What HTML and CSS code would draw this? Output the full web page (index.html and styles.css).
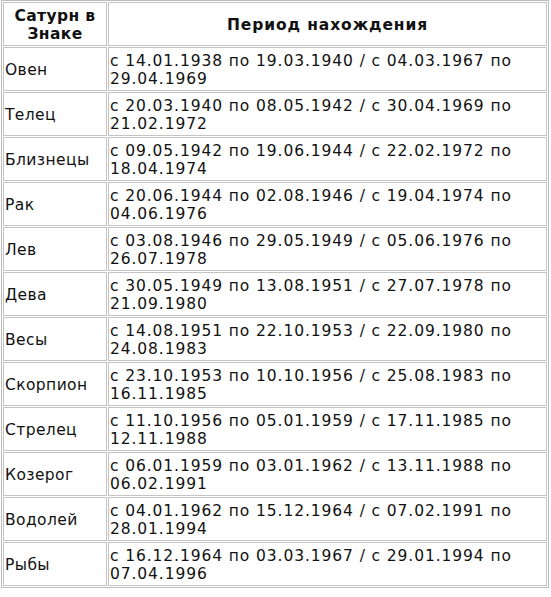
FILE: index.html
```html
<!DOCTYPE html>
<html lang="ru">
<head>
<meta charset="utf-8">
<link rel="stylesheet" href="styles.css">
</head>
<body>
<table class="saturn">
<thead>
<tr><th class="sign">Сатурн в Знаке</th><th class="period">Период нахождения</th></tr>
</thead>
<tbody>
<tr><td class="sign">Овен</td><td class="period">с 14.01.1938 по 19.03.1940 / с 04.03.1967 по 29.04.1969</td></tr>
<tr><td class="sign">Телец</td><td class="period">с 20.03.1940 по 08.05.1942 / с 30.04.1969 по 21.02.1972</td></tr>
<tr><td class="sign">Близнецы</td><td class="period">с 09.05.1942 по 19.06.1944 / с 22.02.1972 по 18.04.1974</td></tr>
<tr><td class="sign">Рак</td><td class="period">с 20.06.1944 по 02.08.1946 / с 19.04.1974 по 04.06.1976</td></tr>
<tr><td class="sign">Лев</td><td class="period">с 03.08.1946 по 29.05.1949 / с 05.06.1976 по 26.07.1978</td></tr>
<tr><td class="sign">Дева</td><td class="period">с 30.05.1949 по 13.08.1951 / с 27.07.1978 по 21.09.1980</td></tr>
<tr><td class="sign">Весы</td><td class="period">с 14.08.1951 по 22.10.1953 / с 22.09.1980 по 24.08.1983</td></tr>
<tr><td class="sign">Скорпион</td><td class="period">с 23.10.1953 по 10.10.1956 / с 25.08.1983 по 16.11.1985</td></tr>
<tr><td class="sign">Стрелец</td><td class="period">с 11.10.1956 по 05.01.1959 / с 17.11.1985 по 12.11.1988</td></tr>
<tr><td class="sign">Козерог</td><td class="period">с 06.01.1959 по 03.01.1962 / с 13.11.1988 по 06.02.1991</td></tr>
<tr><td class="sign">Водолей</td><td class="period">с 04.01.1962 по 15.12.1964 / с 07.02.1991 по 28.01.1994</td></tr>
<tr><td class="sign">Рыбы</td><td class="period">с 16.12.1964 по 03.03.1967 / с 29.01.1994 по 07.04.1996</td></tr>
</tbody>
</table>
</body>
</html>
```
FILE: styles.css
```css
html, body {
  margin: 0;
  padding: 0;
  background: #ffffff;
}
.saturn {
  margin-left: 1px;
  width: 548px;
  border: 1px solid #bdbdbd;
  border-spacing: 1px;
  color: #111;
  font-family: "DejaVu Sans", Verdana, sans-serif;
  font-size: 15.5px;
}
.saturn th, .saturn td {
  border: 1px solid #c4c4c4;
  padding: 3px 1px 1px;
  height: 38px;
  line-height: 18px;
}
.saturn th {
  font-weight: bold;
  text-align: center;
  letter-spacing: 0.9px;
}
.saturn th.sign {
  width: 100px;
  letter-spacing: 0.4px;
}
.saturn td.sign {
  letter-spacing: 0.4px;
  text-align: left;
  vertical-align: middle;
}
.saturn td.period {
  letter-spacing: 0.9px;
  vertical-align: middle;
}
```
